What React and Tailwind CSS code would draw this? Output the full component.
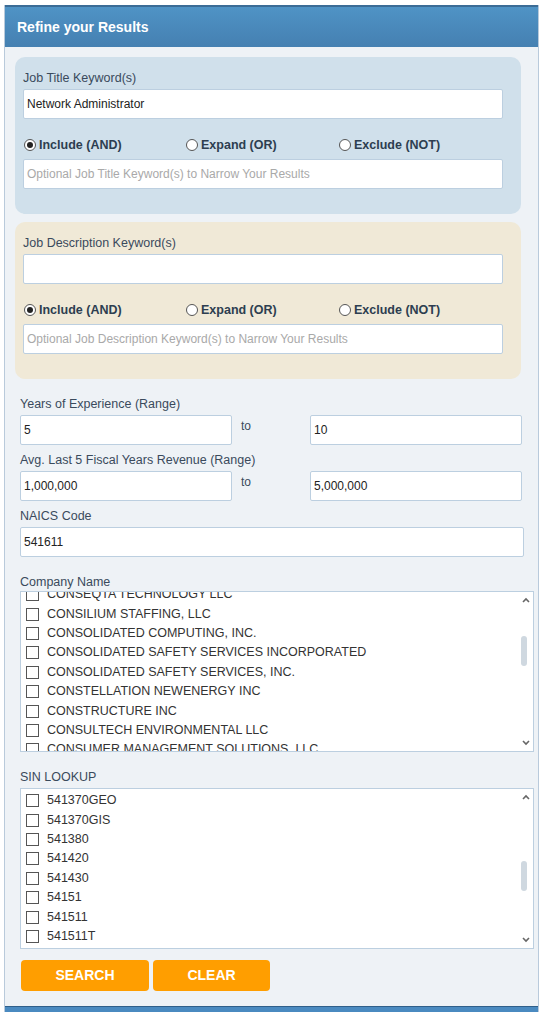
import React from 'react';

const COMPANIES = [
  'CONSEQTA TECHNOLOGY LLC',
  'CONSILIUM STAFFING, LLC',
  'CONSOLIDATED COMPUTING, INC.',
  'CONSOLIDATED SAFETY SERVICES INCORPORATED',
  'CONSOLIDATED SAFETY SERVICES, INC.',
  'CONSTELLATION NEWENERGY INC',
  'CONSTRUCTURE INC',
  'CONSULTECH ENVIRONMENTAL LLC',
  'CONSUMER MANAGEMENT SOLUTIONS, LLC',
];

const SINS = ['541370GEO', '541370GIS', '541380', '541420', '541430', '54151', '541511', '541511T', '541512'];

const inputCls =
  'block h-[30px] bg-white border border-[#bccfe0] rounded-[2px] px-[3px] text-[12px] text-[#222] outline-none placeholder:text-[#a9a9a9]';

const Radio = ({ checked, label, className }) => (
  <label className={`flex items-center ${className}`}>
    <span className="w-[12px] h-[12px] rounded-full border border-[#555] bg-white flex items-center justify-center">
      {checked && <span className="w-[6px] h-[6px] rounded-full bg-[#222]" />}
    </span>
    <span className="ml-[3px] text-[12.5px] font-bold text-[#2d3e50]">{label}</span>
  </label>
);

const KeywordBox = ({ bg, label, value, placeholder }) => (
  <div className={`ml-[10px] w-[506px] rounded-[10px] ${bg} pt-[13px] pb-[25px] px-[8px]`}>
    <div className="h-[16px] leading-[16px] text-[12.5px] text-[#3a4a5c]">{label}</div>
    <input className={`${inputCls} mt-[3px] w-[480px]`} defaultValue={value} readOnly />
    <div className="flex h-[20px] mt-[16px] pl-[1px]">
      <Radio checked label="Include (AND)" className="w-[162px]" />
      <Radio label="Expand (OR)" className="w-[153px]" />
      <Radio label="Exclude (NOT)" />
    </div>
    <input className={`${inputCls} mt-[4px] w-[480px]`} placeholder={placeholder} readOnly />
  </div>
);

const Scrollbar = ({ thumbTop }) => (
  <div className="absolute right-0 top-0 bottom-0 w-[14px]">
    <svg className="absolute left-[3px] top-[5px]" width="8" height="6" viewBox="0 0 8 6">
      <path d="M1 5 L4 2 L7 5" fill="none" stroke="#666" strokeWidth="1.6" />
    </svg>
    <div className="absolute left-[2px] w-[6px] h-[30px] rounded-[3px] bg-[#cfd8e0]" style={{ top: thumbTop }} />
    <svg className="absolute left-[3px] bottom-[5px]" width="8" height="6" viewBox="0 0 8 6">
      <path d="M1 1 L4 4 L7 1" fill="none" stroke="#666" strokeWidth="1.6" />
    </svg>
  </div>
);

const CheckList = ({ items, offset, thumbTop, className = '' }) => (
  <div className={`relative ml-[15px] w-[514px] h-[161px] bg-white border border-[#bccfe0] overflow-hidden ${className}`}>
    <div style={{ marginTop: offset }}>
      {items.map((it) => (
        <div key={it} className="flex items-center h-[19.4px] pl-[5px]">
          <span className="w-[13px] h-[13px] border border-[#555] bg-white shrink-0" />
          <span className="ml-[8px] text-[12.5px] text-[#333] whitespace-nowrap">{it}</span>
        </div>
      ))}
    </div>
    <Scrollbar thumbTop={thumbTop} />
  </div>
);

const Label = ({ children, className = '' }) => (
  <div className={`ml-[15px] h-[16px] leading-[16px] text-[12.5px] text-[#3a4a5c] ${className}`}>{children}</div>
);

export default function App() {
  return (
    <div className="w-[543px] h-[1017px] bg-white pt-[5px] pl-[4px] font-['Liberation_Sans',Arial,sans-serif]">
      <div className="w-[535px] border-x border-[#b9cadb] bg-[#eef2f6]">
        <div className="h-[42px] border-t-2 border-[#3b6c96] bg-gradient-to-b from-[#4f93c5] to-[#4580b1] flex items-center pl-[12px]">
          <span className="text-white font-bold text-[14px]">Refine your Results</span>
        </div>

        <div className="pt-[10px] pb-[15px]">
          <KeywordBox
            bg="bg-[#d0e0eb]"
            label="Job Title Keyword(s)"
            value="Network Administrator"
            placeholder="Optional Job Title Keyword(s) to Narrow Your Results"
          />
          <div className="h-[8px]" />
          <KeywordBox
            bg="bg-[#f0e9d7]"
            label="Job Description Keyword(s)"
            value=""
            placeholder="Optional Job Description Keyword(s) to Narrow Your Results"
          />

          <Label className="mt-[17px]">Years of Experience (Range)</Label>
          <div className="flex mt-[3px] ml-[15px]">
            <input className={`${inputCls} w-[212px]`} defaultValue="5" readOnly />
            <span className="w-[78px] pl-[9px] pt-[2px] text-[12px] text-[#3a4a5c]">to</span>
            <input className={`${inputCls} w-[212px]`} defaultValue="10" readOnly />
          </div>

          <Label className="mt-[7px]">Avg. Last 5 Fiscal Years Revenue (Range)</Label>
          <div className="flex mt-[3px] ml-[15px]">
            <input className={`${inputCls} w-[212px]`} defaultValue="1,000,000" readOnly />
            <span className="w-[78px] pl-[9px] pt-[2px] text-[12px] text-[#3a4a5c]">to</span>
            <input className={`${inputCls} w-[212px]`} defaultValue="5,000,000" readOnly />
          </div>

          <Label className="mt-[7px]">NAICS Code</Label>
          <input className={`${inputCls} mt-[3px] ml-[15px] w-[504px]`} defaultValue="541611" readOnly />

          <Label className="mt-[17px]">Company Name</Label>
          <CheckList items={COMPANIES} offset={-7} thumbTop={44} className="mt-[1px]" />

          <Label className="mt-[17px]">SIN LOOKUP</Label>
          <CheckList items={SINS} offset={2} thumbTop={72} className="mt-[3px]" />

          <div className="flex gap-[4px] mt-[11px] ml-[16px]">
            <button className="w-[128px] h-[31px] rounded-[4px] bg-[#ff9e00] text-white font-bold text-[14px]">SEARCH</button>
            <button className="w-[117px] h-[31px] rounded-[4px] bg-[#ff9e00] text-white font-bold text-[14px]">CLEAR</button>
          </div>
        </div>

        <div className="h-[6px] border-t border-[#2f5f8a] bg-[#4a8ac0]" />
      </div>
    </div>
  );
}
